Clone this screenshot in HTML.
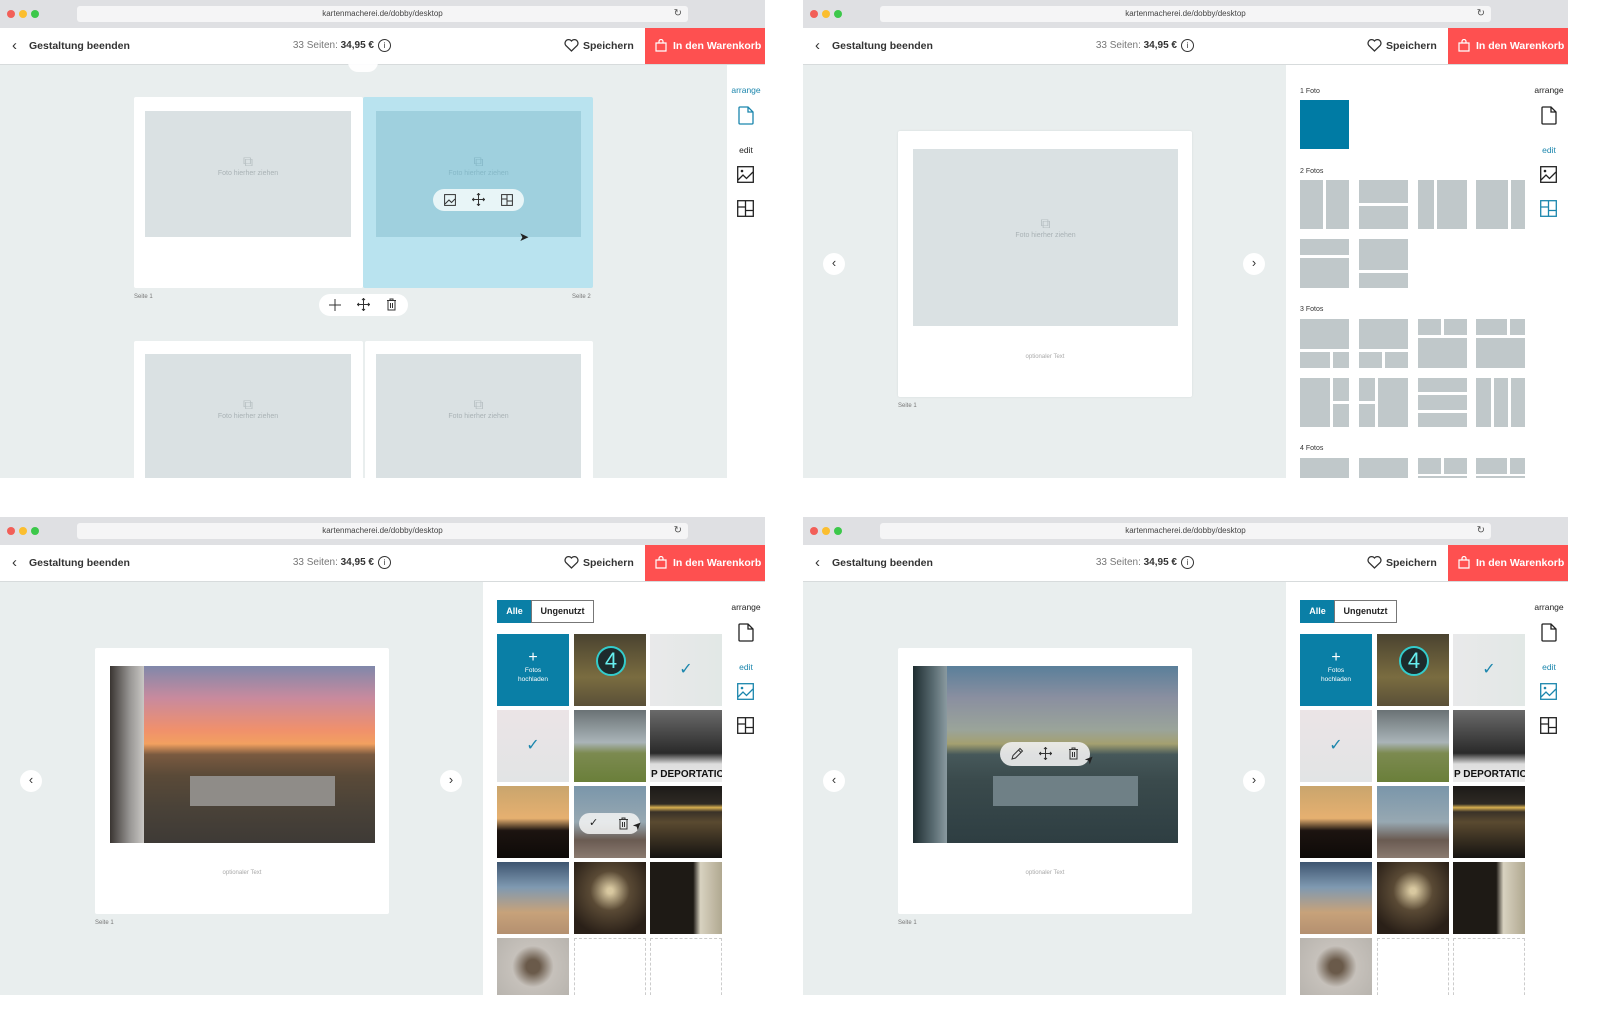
<!DOCTYPE html>
<html><head><meta charset="utf-8"><style>
*{margin:0;padding:0;box-sizing:border-box}
body{width:1600px;height:1015px;background:#fff;position:relative;overflow:hidden;font-family:"Liberation Sans",sans-serif;color:#222}
.win{position:absolute;width:765px;height:478px;overflow:hidden;background:#e9eeee}
.tb{position:absolute;left:0;top:0;width:765px;height:28px;background:#dfe0e3}
.dot{position:absolute;top:10px;width:8px;height:8px;border-radius:50%}
.url{position:absolute;left:77px;top:6px;width:611px;height:16px;background:#f5f5f6;border-radius:3px;font-size:8px;color:#444;text-align:center;line-height:16px}
.rl{position:absolute;right:6px;top:0;font-size:10px;color:#555}
.hd{position:absolute;left:0;top:28px;width:765px;height:37px;background:#fff;border-bottom:1px solid #d7dbdc;font-size:10.5px}
.hd span,.hd b,.hd svg,.hd div{position:absolute}
.back{left:12px;top:9px;font-size:15px;color:#333}
.gb{left:29px;top:12px;color:#333}
.pr{right:391px;top:12px;color:#777;font-size:10px;white-space:nowrap}.pr b{position:static;color:#333}
.info{left:378px;top:11px;width:13px;height:13px;border:1.2px solid #333;border-radius:50%;font-size:8px;text-align:center;line-height:11px;color:#333}
.heart{left:564px;top:11px}
.sp{left:583px;top:12px;color:#333;font-weight:bold}
.cart{left:645px;top:0;width:120px;height:36px;background:#fe5050;color:#fff;font-weight:bold;line-height:36px;padding-left:28px}
.cart svg{left:10px;top:11px}
.side{position:absolute;left:727px;top:65px;width:38px;height:413px;background:#fff}
.lbl{position:absolute;width:40px;left:726px;text-align:center;font-size:8.5px;color:#222}
.blue{color:#1b86ad}
.ic{position:absolute}
.page{position:absolute;background:#fff;border-radius:2px}
.ph{position:absolute;background:#dae1e3;font-size:7px;color:#a9b2b5;text-align:center}
.small{position:absolute;font-size:6px;color:#777}
.pill{position:absolute;background:rgba(255,255,255,.92);border-radius:12px}
.arr{position:absolute;width:22px;height:22px;border-radius:50%;background:#fff;text-align:center;line-height:20px;font-size:13px;color:#333}
.panel{position:absolute;left:483px;top:65px;width:282px;height:413px;background:#fff}
.t{position:absolute;width:72px;height:72px;overflow:hidden}
.seg{position:absolute;top:83px;height:23px;font-size:9px;font-weight:bold;line-height:21px;text-align:center}
</style></head><body>

<!-- ========== WINDOW 1 ========== -->
<div class="win" style="left:0;top:0">
 <div class="tb"><i class="dot" style="left:7px;background:#f25f58"></i><i class="dot" style="left:19px;background:#fbbe2f"></i><i class="dot" style="left:31px;background:#3cc84a"></i><div class="url">kartenmacherei.de/dobby/desktop<span class="rl">↻</span></div></div>
 <div class="hd"><span class="back">‹</span><b class="gb">Gestaltung beenden</b><span class="pr">33 Seiten: <b>34,95 €</b></span><span class="info">i</span>
  <svg class="heart" width="15" height="13" viewBox="0 0 15 13"><path d="M7.5 12 L1.8 6.5 A3.3 3.3 0 0 1 7.5 2 A3.3 3.3 0 0 1 13.2 6.5 Z" fill="none" stroke="#333" stroke-width="1.3"/></svg><span class="sp">Speichern</span>
  <div class="cart"><svg width="12" height="13" viewBox="0 0 12 13"><path d="M1 4h10v8H1z M4 4V2.5a2 2 0 0 1 4 0V4" fill="none" stroke="#fff" stroke-width="1.2"/></svg>In den Warenkorb</div></div>
 <div class="pill" style="left:348px;top:52px;width:30px;height:20px;border-radius:10px"></div>
 <div class="page" style="left:134px;top:97px;width:229px;height:191px"></div>
 <div class="ph" style="left:145px;top:111px;width:206px;height:126px"><div style="margin-top:42px;font-size:14px;color:#b5bec1">⧉</div>Foto hierher ziehen</div>
 <div class="page" style="left:363px;top:97px;width:230px;height:191px;background:#b9e3ef"></div>
 <div class="ph" style="left:376px;top:111px;width:205px;height:126px;background:#9fd0de;color:#86b8c7"><div style="margin-top:42px;font-size:14px">⧉</div>Foto hierher ziehen</div>
 <div class="pill" style="left:433px;top:189px;width:91px;height:22px;background:rgba(240,248,250,.9)">
  <svg class="ic" style="left:11px;top:5px" width="12" height="12" viewBox="0 0 12 12"><rect x=".6" y=".6" width="10.8" height="10.8" fill="none" stroke="#333"/><path d="M1 10l4-4 2.5 2.5L11 5" fill="none" stroke="#333"/></svg>
  <svg class="ic" style="left:39px;top:4px" width="13" height="13" viewBox="0 0 13 13"><path d="M6.5 0v13M0 6.5h13M5 2l1.5-1.5L8 2M5 11l1.5 1.5L8 11M2 5L.5 6.5 2 8M11 5l1.5 1.5L11 8" fill="none" stroke="#333"/></svg>
  <svg class="ic" style="left:68px;top:5px" width="12" height="12" viewBox="0 0 12 12"><rect x=".6" y=".6" width="10.8" height="10.8" fill="none" stroke="#333"/><path d="M6 1v10M1 5h5M6 7h5" stroke="#333"/></svg>
 </div>
 <div style="position:absolute;left:519px;top:230px;font-size:12px">➤</div>
 <div class="small" style="left:134px;top:294px">Seite 1</div><div class="small" style="left:572px;top:294px">Seite 2</div>
 <div class="pill" style="left:319px;top:294px;width:89px;height:22px;background:#fff">
  <svg class="ic" style="left:10px;top:5px" width="12" height="12"><path d="M6 0v12M0 6h12" stroke="#333"/></svg>
  <svg class="ic" style="left:38px;top:4px" width="13" height="13" viewBox="0 0 13 13"><path d="M6.5 0v13M0 6.5h13M5 2l1.5-1.5L8 2M5 11l1.5 1.5L8 11M2 5L.5 6.5 2 8M11 5l1.5 1.5L11 8" fill="none" stroke="#333"/></svg>
  <svg class="ic" style="left:67px;top:4px" width="11" height="13" viewBox="0 0 11 13"><path d="M1 2.5h9M4 2.5V1h3v1.5M2 2.5V12h7V2.5M4.5 5v5M6.5 5v5" fill="none" stroke="#333"/></svg>
 </div>
 <div class="page" style="left:134px;top:341px;width:229px;height:150px"></div>
 <div class="ph" style="left:145px;top:354px;width:206px;height:130px"><div style="margin-top:42px;font-size:14px;color:#b5bec1">⧉</div>Foto hierher ziehen</div>
 <div class="page" style="left:365px;top:341px;width:228px;height:150px"></div>
 <div class="ph" style="left:376px;top:354px;width:205px;height:130px"><div style="margin-top:42px;font-size:14px;color:#b5bec1">⧉</div>Foto hierher ziehen</div>
 <div class="side"></div>
 <div class="lbl blue" style="top:85px">arrange</div>
 <svg class="ic" style="left:738px;top:106px" width="16" height="19" viewBox="0 0 16 19"><path d="M2 1h8l5 5v11a1 1 0 0 1-1 1H2a1 1 0 0 1-1-1V2a1 1 0 0 1 1-1zM10 1v5h5" fill="none" stroke="#1b86ad" stroke-width="1.3"/></svg>
 <div class="lbl" style="top:145px">edit</div>
 <svg class="ic" style="left:737px;top:166px" width="17" height="17" viewBox="0 0 17 17"><rect x=".7" y=".7" width="15.6" height="15.6" fill="none" stroke="#222" stroke-width="1.3"/><circle cx="5" cy="5" r="1.3" fill="#222"/><path d="M1 14l5-5 3.5 3.5L16 6" fill="none" stroke="#222" stroke-width="1.3"/></svg>
 <svg class="ic" style="left:737px;top:200px" width="17" height="17" viewBox="0 0 17 17"><rect x=".7" y=".7" width="15.6" height="15.6" fill="none" stroke="#222" stroke-width="1.3"/><path d="M8.5 1v15M1 7h7.5M8.5 10.5H16" stroke="#222" stroke-width="1.3"/></svg>
</div>

<!-- ========== WINDOW 2 ========== -->
<div class="win" style="left:803px;top:0">
 <div class="tb"><i class="dot" style="left:7px;background:#f25f58"></i><i class="dot" style="left:19px;background:#fbbe2f"></i><i class="dot" style="left:31px;background:#3cc84a"></i><div class="url">kartenmacherei.de/dobby/desktop<span class="rl">↻</span></div></div>
 <div class="hd"><span class="back">‹</span><b class="gb">Gestaltung beenden</b><span class="pr">33 Seiten: <b>34,95 €</b></span><span class="info">i</span>
  <svg class="heart" width="15" height="13" viewBox="0 0 15 13"><path d="M7.5 12 L1.8 6.5 A3.3 3.3 0 0 1 7.5 2 A3.3 3.3 0 0 1 13.2 6.5 Z" fill="none" stroke="#333" stroke-width="1.3"/></svg><span class="sp">Speichern</span>
  <div class="cart"><svg width="12" height="13" viewBox="0 0 12 13"><path d="M1 4h10v8H1z M4 4V2.5a2 2 0 0 1 4 0V4" fill="none" stroke="#fff" stroke-width="1.2"/></svg>In den Warenkorb</div></div>
 <div class="page" style="left:95px;top:131px;width:294px;height:266px;box-shadow:0 0 2px rgba(0,0,0,.08)"></div>
 <div class="ph" style="left:110px;top:149px;width:265px;height:177px"><div style="margin-top:66px;font-size:14px;color:#b5bec1">⧉</div>Foto hierher ziehen</div>
 <div class="small" style="left:95px;top:354px;width:294px;text-align:center;color:#aaa">optionaler Text</div>
 <div class="small" style="left:95px;top:403px">Seite 1</div>
 <div class="arr" style="left:20px;top:253px">‹</div><div class="arr" style="left:440px;top:253px">›</div>
 <div class="panel"></div>
 <svg class="ic" style="left:0;top:0" width="765" height="478" fill="#c0c8ca">
  <text x="497" y="93" font-size="7" fill="#333" font-family="Liberation Sans">1 Foto</text>
  <rect x="497" y="100" width="49" height="49" fill="#007ba4"/>
  <text x="497" y="173" font-size="7" fill="#333" font-family="Liberation Sans">2 Fotos</text>
  <rect x="497" y="180" width="23" height="49"/><rect x="523" y="180" width="23" height="49"/>
  <rect x="556" y="180" width="49" height="23"/><rect x="556" y="206" width="49" height="23"/>
  <rect x="615" y="180" width="16" height="49"/><rect x="634" y="180" width="30" height="49"/>
  <rect x="673" y="180" width="32" height="49"/><rect x="708" y="180" width="14" height="49"/>
  <rect x="497" y="239" width="49" height="16"/><rect x="497" y="258" width="49" height="30"/>
  <rect x="556" y="239" width="49" height="31"/><rect x="556" y="273" width="49" height="15"/>
  <text x="497" y="311" font-size="7" fill="#333" font-family="Liberation Sans">3 Fotos</text>
  <rect x="497" y="319" width="49" height="30"/><rect x="497" y="352" width="30" height="16"/><rect x="530" y="352" width="16" height="16"/>
  <rect x="556" y="319" width="49" height="30"/><rect x="556" y="352" width="23" height="16"/><rect x="582" y="352" width="23" height="16"/>
  <rect x="615" y="319" width="23" height="16"/><rect x="641" y="319" width="23" height="16"/><rect x="615" y="338" width="49" height="30"/>
  <rect x="673" y="319" width="31" height="16"/><rect x="707" y="319" width="15" height="16"/><rect x="673" y="338" width="49" height="30"/>
  <rect x="497" y="378" width="30" height="49"/><rect x="530" y="378" width="16" height="23"/><rect x="530" y="404" width="16" height="23"/>
  <rect x="556" y="378" width="16" height="23"/><rect x="556" y="404" width="16" height="23"/><rect x="575" y="378" width="30" height="49"/>
  <rect x="615" y="378" width="49" height="14"/><rect x="615" y="395" width="49" height="15"/><rect x="615" y="413" width="49" height="14"/>
  <rect x="673" y="378" width="15" height="49"/><rect x="691" y="378" width="14" height="49"/><rect x="708" y="378" width="14" height="49"/>
  <text x="497" y="450" font-size="7" fill="#333" font-family="Liberation Sans">4 Fotos</text>
  <rect x="497" y="458" width="49" height="20"/><rect x="556" y="458" width="49" height="20"/>
  <rect x="615" y="458" width="23" height="16"/><rect x="641" y="458" width="23" height="16"/><rect x="615" y="476" width="49" height="2"/>
  <rect x="673" y="458" width="31" height="16"/><rect x="707" y="458" width="15" height="16"/><rect x="673" y="476" width="49" height="2"/>
 </svg>
 <div class="lbl" style="top:85px">arrange</div>
 <svg class="ic" style="left:738px;top:106px" width="16" height="19" viewBox="0 0 16 19"><path d="M2 1h8l5 5v11a1 1 0 0 1-1 1H2a1 1 0 0 1-1-1V2a1 1 0 0 1 1-1zM10 1v5h5" fill="none" stroke="#222" stroke-width="1.3"/></svg>
 <div class="lbl blue" style="top:145px">edit</div>
 <svg class="ic" style="left:737px;top:166px" width="17" height="17" viewBox="0 0 17 17"><rect x=".7" y=".7" width="15.6" height="15.6" fill="none" stroke="#222" stroke-width="1.3"/><circle cx="5" cy="5" r="1.3" fill="#222"/><path d="M1 14l5-5 3.5 3.5L16 6" fill="none" stroke="#222" stroke-width="1.3"/></svg>
 <svg class="ic" style="left:737px;top:200px" width="17" height="17" viewBox="0 0 17 17"><rect x=".7" y=".7" width="15.6" height="15.6" fill="none" stroke="#1b86ad" stroke-width="1.3"/><path d="M8.5 1v15M1 7h7.5M8.5 10.5H16" stroke="#1b86ad" stroke-width="1.3"/></svg>
</div>

<!-- ========== WINDOW 3 ========== -->
<div class="win" style="left:0;top:517px">
 <div class="tb"><i class="dot" style="left:7px;background:#f25f58"></i><i class="dot" style="left:19px;background:#fbbe2f"></i><i class="dot" style="left:31px;background:#3cc84a"></i><div class="url">kartenmacherei.de/dobby/desktop<span class="rl">↻</span></div></div>
 <div class="hd"><span class="back">‹</span><b class="gb">Gestaltung beenden</b><span class="pr">33 Seiten: <b>34,95 €</b></span><span class="info">i</span>
  <svg class="heart" width="15" height="13" viewBox="0 0 15 13"><path d="M7.5 12 L1.8 6.5 A3.3 3.3 0 0 1 7.5 2 A3.3 3.3 0 0 1 13.2 6.5 Z" fill="none" stroke="#333" stroke-width="1.3"/></svg><span class="sp">Speichern</span>
  <div class="cart"><svg width="12" height="13" viewBox="0 0 12 13"><path d="M1 4h10v8H1z M4 4V2.5a2 2 0 0 1 4 0V4" fill="none" stroke="#fff" stroke-width="1.2"/></svg>In den Warenkorb</div></div>
 <div class="page" style="left:95px;top:131px;width:294px;height:266px"></div>
 <div style="position:absolute;left:110px;top:149px;width:265px;height:177px;overflow:hidden;background:linear-gradient(to bottom,#8088aa 0%,#c88a9e 18%,#f0906c 36%,#f2a060 44%,#7a5a40 50%,#5a4a38 62%,#4a4238 80%,#3e3a36 100%)">
  <div style="position:absolute;left:0;top:0;width:34px;height:177px;background:linear-gradient(to right,#3a3532,#9a9896 60%,#c9c7c4)"></div>
  <div style="position:absolute;left:80px;top:110px;width:145px;height:30px;background:#8f8c88"></div>
 </div>
 <div class="small" style="left:95px;top:353px;width:294px;text-align:center;color:#aaa">optionaler Text</div>
 <div class="small" style="left:95px;top:403px">Seite 1</div>
 <div class="arr" style="left:20px;top:253px">‹</div><div class="arr" style="left:440px;top:253px">›</div>
 <div class="panel"></div>
 <div class="seg" style="left:497px;width:35px;background:#0a7fa6;color:#fff;border:1px solid #0a7fa6">Alle</div>
 <div class="seg" style="left:531px;width:63px;border:1px solid #777;color:#222">Ungenutzt</div>
 <div class="t" style="left:497px;top:117px;background:#0a7fa6;color:#fff;text-align:center;font-size:6.5px;line-height:9px"><div style="font-size:16px;margin-top:16px;line-height:16px">+</div>Fotos<br>hochladen</div>
 <div class="t" style="left:574px;top:117px;background:linear-gradient(#4a4330,#7a6c40 60%,#5a5038)"><div style="position:absolute;left:22px;top:12px;width:30px;height:30px;border-radius:50%;background:#1d2b2c;border:2px solid #3cc;color:#6ee;font-size:22px;text-align:center;line-height:26px">4</div></div>
 <div class="t" style="left:650px;top:117px;background:linear-gradient(to right,#e9e9ea,#e2e8e6);color:#1b86ad;text-align:center;line-height:72px">✓</div>
 <div class="t" style="left:497px;top:193px;background:linear-gradient(#ebe4e6,#e2e4e5);color:#1b86ad;text-align:center;line-height:72px">✓</div>
 <div class="t" style="left:574px;top:193px;background:linear-gradient(#6a7275,#aab4b8 45%,#7c8a50 60%,#6a7f3a)"></div>
 <div class="t" style="left:650px;top:193px;background:linear-gradient(#6a6a6a,#2a2a2a 60%,#ddd 75%,#eee)"><div style="position:absolute;bottom:2px;left:1px;font-size:10px;font-weight:bold;color:#111;white-space:nowrap">P DEPORTATIO</div></div>
 <div class="t" style="left:497px;top:269px;background:linear-gradient(#c9a56d,#e6b070 45%,#1c1410 62%,#0e0a08)"></div>
 <div class="t" style="left:574px;top:269px;background:linear-gradient(#7a96aa,#97a8b2 50%,#6a5b52 75%,#8a7a70)"></div>
 <div class="t" style="left:650px;top:269px;background:linear-gradient(#1c1a18,#2e2a24 25%,#d8b050 30%,#3a3228 36%,#5a4a30 50%,#151311)"></div>
 <div class="t" style="left:497px;top:345px;background:linear-gradient(#3e5570,#7f99b1 35%,#c7a27a 70%,#b49070)"></div>
 <div class="t" style="left:574px;top:345px;background:radial-gradient(circle at 50% 40%,#d8c8a0 5%,#5a4a35 35%,#2a2018 80%)"></div>
 <div class="t" style="left:650px;top:345px;background:linear-gradient(to right,#1e1a15 60%,#d8d2c0 70%,#b0a890)"></div>
 <div class="t" style="left:497px;top:421px;height:57px;background:radial-gradient(circle at 50% 50%,#6a5a4a 15%,#c6c1bb 45%,#b8b4ae)"></div>
 <div class="t" style="left:574px;top:421px;border:1px dashed #ccc"></div>
 <div class="t" style="left:650px;top:421px;border:1px dashed #ccc"></div>
 <div class="pill" style="left:579px;top:296px;width:61px;height:21px;background:rgba(245,245,245,.85)">
  <span style="position:absolute;left:10px;top:3px;font-size:11px">✓</span>
  <svg class="ic" style="left:39px;top:4px" width="11" height="13" viewBox="0 0 11 13"><path d="M1 2.5h9M4 2.5V1h3v1.5M2 2.5V12h7V2.5M4.5 5v5M6.5 5v5" fill="none" stroke="#333"/></svg>
 </div>
 <div style="position:absolute;left:633px;top:302px;font-size:11px;transform:rotate(-45deg)">➤</div>
 <div class="lbl" style="top:85px">arrange</div>
 <svg class="ic" style="left:738px;top:106px" width="16" height="19" viewBox="0 0 16 19"><path d="M2 1h8l5 5v11a1 1 0 0 1-1 1H2a1 1 0 0 1-1-1V2a1 1 0 0 1 1-1zM10 1v5h5" fill="none" stroke="#222" stroke-width="1.3"/></svg>
 <div class="lbl blue" style="top:145px">edit</div>
 <svg class="ic" style="left:737px;top:166px" width="17" height="17" viewBox="0 0 17 17"><rect x=".7" y=".7" width="15.6" height="15.6" fill="none" stroke="#1b86ad" stroke-width="1.3"/><circle cx="5" cy="5" r="1.3" fill="#1b86ad"/><path d="M1 14l5-5 3.5 3.5L16 6" fill="none" stroke="#1b86ad" stroke-width="1.3"/></svg>
 <svg class="ic" style="left:737px;top:200px" width="17" height="17" viewBox="0 0 17 17"><rect x=".7" y=".7" width="15.6" height="15.6" fill="none" stroke="#222" stroke-width="1.3"/><path d="M8.5 1v15M1 7h7.5M8.5 10.5H16" stroke="#222" stroke-width="1.3"/></svg>
</div>

<!-- ========== WINDOW 4 ========== -->
<div class="win" style="left:803px;top:517px">
 <div class="tb"><i class="dot" style="left:7px;background:#f25f58"></i><i class="dot" style="left:19px;background:#fbbe2f"></i><i class="dot" style="left:31px;background:#3cc84a"></i><div class="url">kartenmacherei.de/dobby/desktop<span class="rl">↻</span></div></div>
 <div class="hd"><span class="back">‹</span><b class="gb">Gestaltung beenden</b><span class="pr">33 Seiten: <b>34,95 €</b></span><span class="info">i</span>
  <svg class="heart" width="15" height="13" viewBox="0 0 15 13"><path d="M7.5 12 L1.8 6.5 A3.3 3.3 0 0 1 7.5 2 A3.3 3.3 0 0 1 13.2 6.5 Z" fill="none" stroke="#333" stroke-width="1.3"/></svg><span class="sp">Speichern</span>
  <div class="cart"><svg width="12" height="13" viewBox="0 0 12 13"><path d="M1 4h10v8H1z M4 4V2.5a2 2 0 0 1 4 0V4" fill="none" stroke="#fff" stroke-width="1.2"/></svg>In den Warenkorb</div></div>
 <div class="page" style="left:95px;top:131px;width:294px;height:266px"></div>
 <div style="position:absolute;left:110px;top:149px;width:265px;height:177px;overflow:hidden;background:linear-gradient(to bottom,#5a7f9a 0%,#8a8fa0 18%,#9aa49a 36%,#a4a070 44%,#46585a 50%,#3a4a4c 65%,#2e3e42 100%)">
  <div style="position:absolute;left:0;top:0;width:34px;height:177px;background:linear-gradient(to right,#1e2c30,#5a6c72 60%,#8a9aa0)"></div>
  <div style="position:absolute;left:80px;top:110px;width:145px;height:30px;background:#6f8086"></div>
 </div>
 <div class="pill" style="left:197px;top:225px;width:90px;height:24px;background:rgba(240,240,240,.9)">
  <svg class="ic" style="left:11px;top:5px" width="13" height="13" viewBox="0 0 13 13"><path d="M1 12l1-3.5L9 1.5l2.5 2.5-7 7z M7.5 3l2.5 2.5" fill="none" stroke="#333"/></svg>
  <svg class="ic" style="left:39px;top:5px" width="13" height="13" viewBox="0 0 13 13"><path d="M6.5 0v13M0 6.5h13M5 2l1.5-1.5L8 2M5 11l1.5 1.5L8 11M2 5L.5 6.5 2 8M11 5l1.5 1.5L11 8" fill="none" stroke="#333"/></svg>
  <svg class="ic" style="left:68px;top:5px" width="11" height="13" viewBox="0 0 11 13"><path d="M1 2.5h9M4 2.5V1h3v1.5M2 2.5V12h7V2.5M4.5 5v5M6.5 5v5" fill="none" stroke="#333"/></svg>
 </div>
 <div style="position:absolute;left:282px;top:236px;font-size:11px;transform:rotate(-45deg)">➤</div>
 <div class="small" style="left:95px;top:353px;width:294px;text-align:center;color:#aaa">optionaler Text</div>
 <div class="small" style="left:95px;top:403px">Seite 1</div>
 <div class="arr" style="left:20px;top:253px">‹</div><div class="arr" style="left:440px;top:253px">›</div>
 <div class="panel"></div>
 <div class="seg" style="left:497px;width:35px;background:#0a7fa6;color:#fff;border:1px solid #0a7fa6">Alle</div>
 <div class="seg" style="left:531px;width:63px;border:1px solid #777;color:#222">Ungenutzt</div>
 <div class="t" style="left:497px;top:117px;background:#0a7fa6;color:#fff;text-align:center;font-size:6.5px;line-height:9px"><div style="font-size:16px;margin-top:16px;line-height:16px">+</div>Fotos<br>hochladen</div>
 <div class="t" style="left:574px;top:117px;background:linear-gradient(#4a4330,#7a6c40 60%,#5a5038)"><div style="position:absolute;left:22px;top:12px;width:30px;height:30px;border-radius:50%;background:#1d2b2c;border:2px solid #3cc;color:#6ee;font-size:22px;text-align:center;line-height:26px">4</div></div>
 <div class="t" style="left:650px;top:117px;background:linear-gradient(to right,#e9e9ea,#e2e8e6);color:#1b86ad;text-align:center;line-height:72px">✓</div>
 <div class="t" style="left:497px;top:193px;background:linear-gradient(#ebe4e6,#e2e4e5);color:#1b86ad;text-align:center;line-height:72px">✓</div>
 <div class="t" style="left:574px;top:193px;background:linear-gradient(#6a7275,#aab4b8 45%,#7c8a50 60%,#6a7f3a)"></div>
 <div class="t" style="left:650px;top:193px;background:linear-gradient(#6a6a6a,#2a2a2a 60%,#ddd 75%,#eee)"><div style="position:absolute;bottom:2px;left:1px;font-size:10px;font-weight:bold;color:#111;white-space:nowrap">P DEPORTATIO</div></div>
 <div class="t" style="left:497px;top:269px;background:linear-gradient(#c9a56d,#e6b070 45%,#1c1410 62%,#0e0a08)"></div>
 <div class="t" style="left:574px;top:269px;background:linear-gradient(#7a96aa,#97a8b2 50%,#6a5b52 75%,#8a7a70)"></div>
 <div class="t" style="left:650px;top:269px;background:linear-gradient(#1c1a18,#2e2a24 25%,#d8b050 30%,#3a3228 36%,#5a4a30 50%,#151311)"></div>
 <div class="t" style="left:497px;top:345px;background:linear-gradient(#3e5570,#7f99b1 35%,#c7a27a 70%,#b49070)"></div>
 <div class="t" style="left:574px;top:345px;background:radial-gradient(circle at 50% 40%,#d8c8a0 5%,#5a4a35 35%,#2a2018 80%)"></div>
 <div class="t" style="left:650px;top:345px;background:linear-gradient(to right,#1e1a15 60%,#d8d2c0 70%,#b0a890)"></div>
 <div class="t" style="left:497px;top:421px;height:57px;background:radial-gradient(circle at 50% 50%,#6a5a4a 15%,#c6c1bb 45%,#b8b4ae)"></div>
 <div class="t" style="left:574px;top:421px;border:1px dashed #ccc"></div>
 <div class="t" style="left:650px;top:421px;border:1px dashed #ccc"></div>
 <div class="lbl" style="top:85px">arrange</div>
 <svg class="ic" style="left:738px;top:106px" width="16" height="19" viewBox="0 0 16 19"><path d="M2 1h8l5 5v11a1 1 0 0 1-1 1H2a1 1 0 0 1-1-1V2a1 1 0 0 1 1-1zM10 1v5h5" fill="none" stroke="#222" stroke-width="1.3"/></svg>
 <div class="lbl blue" style="top:145px">edit</div>
 <svg class="ic" style="left:737px;top:166px" width="17" height="17" viewBox="0 0 17 17"><rect x=".7" y=".7" width="15.6" height="15.6" fill="none" stroke="#1b86ad" stroke-width="1.3"/><circle cx="5" cy="5" r="1.3" fill="#1b86ad"/><path d="M1 14l5-5 3.5 3.5L16 6" fill="none" stroke="#1b86ad" stroke-width="1.3"/></svg>
 <svg class="ic" style="left:737px;top:200px" width="17" height="17" viewBox="0 0 17 17"><rect x=".7" y=".7" width="15.6" height="15.6" fill="none" stroke="#222" stroke-width="1.3"/><path d="M8.5 1v15M1 7h7.5M8.5 10.5H16" stroke="#222" stroke-width="1.3"/></svg>
</div>
</body></html>
